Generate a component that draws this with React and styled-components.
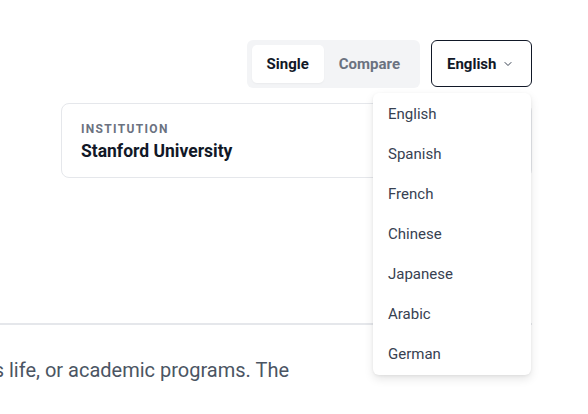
import React, { useState } from "react";
import styled, { createGlobalStyle } from "styled-components";
import { ChevronDown } from "lucide-react";

const GlobalStyle = createGlobalStyle`
  html, body {
    margin: 0;
    padding: 0;
    background: #ffffff;
    font-family: Roboto, "Liberation Sans", Arial, sans-serif;
    overflow: hidden;
  }
  * { box-sizing: border-box; }
`;

const languages = ["English", "Spanish", "French", "Chinese", "Japanese", "Arabic", "German"];

export default function App() {
  const [mode, setMode] = useState("single");
  const [lang, setLang] = useState("English");

  return (
    <>
      <GlobalStyle />
      <Page>
        <Toolbar>
          <Toggle>
            <ToggleButton $active={mode === "single"} onClick={() => setMode("single")}>
              Single
            </ToggleButton>
            <ToggleButton $active={mode === "compare"} onClick={() => setMode("compare")}>
              Compare
            </ToggleButton>
          </Toggle>
          <SelectWrap>
            <SelectButton>
              {lang}
              <ChevronDown size={12} strokeWidth={2} color="#374151" />
            </SelectButton>
            <Menu>
              {languages.map((l) => (
                <MenuItem key={l} onClick={() => setLang(l)}>
                  {l}
                </MenuItem>
              ))}
            </Menu>
          </SelectWrap>
        </Toolbar>

        <Card>
          <CardLabel>Institution</CardLabel>
          <CardTitle>Stanford University</CardTitle>
        </Card>

        <Divider />

        <Lead>
          <LeadText>
            Ask questions about admissions, financial aid, campus life, or academic programs. The
          </LeadText>
        </Lead>
      </Page>
    </>
  );
}

const Page = styled.div`
  width: 588px;
  height: 414px;
  padding: 40px 56px 0 0;
  display: flex;
  flex-direction: column;
`;

const Toolbar = styled.div`
  display: flex;
  justify-content: flex-end;
  align-items: center;
  gap: 11px;
  height: 47px;
`;

const Toggle = styled.div`
  display: flex;
  align-items: center;
  height: 48px;
  padding: 5px;
  background: #f3f4f6;
  border-radius: 6px;
`;

const ToggleButton = styled.button`
  height: 38px;
  padding: 0 15px;
  border: none;
  border-radius: 5px;
  font-family: inherit;
  font-size: 15px;
  font-weight: 700;
  cursor: pointer;
  background: ${(p) => (p.$active ? "#ffffff" : "transparent")};
  color: ${(p) => (p.$active ? "#111827" : "#6b7280")};
  box-shadow: ${(p) => (p.$active ? "0 1px 2px rgba(0,0,0,0.04)" : "none")};
`;

const SelectWrap = styled.div`
  position: relative;
`;

const SelectButton = styled.button`
  display: flex;
  align-items: center;
  gap: 6px;
  height: 47px;
  width: 101px;
  padding: 0 15px;
  border: 1px solid #111827;
  border-radius: 6px;
  background: #ffffff;
  font-family: inherit;
  font-size: 15px;
  font-weight: 700;
  color: #111827;
  cursor: pointer;
`;

const Menu = styled.ul`
  position: absolute;
  top: 53px;
  right: 1px;
  width: 158px;
  margin: 0;
  padding: 1px 0 1px;
  list-style: none;
  background: #ffffff;
  border-radius: 6px;
  box-shadow: 0 4px 10px rgba(0, 0, 0, 0.1), 0 1px 3px rgba(0, 0, 0, 0.06);
  z-index: 10;
`;

const MenuItem = styled.li`
  height: 40px;
  display: flex;
  align-items: center;
  padding: 0 15px;
  font-size: 15px;
  color: #374151;
  cursor: pointer;
`;

const Card = styled.div`
  margin: 16px 0 0 61px;
  height: 75px;
  padding: 18px 19px 0;
  border: 1px solid #e5e7eb;
  border-radius: 8px;
  background: #ffffff;
`;

const CardLabel = styled.div`
  font-size: 12px;
  font-weight: 700;
  letter-spacing: 0.11em;
  text-transform: uppercase;
  color: #6b7280;
  line-height: 14px;
`;

const CardTitle = styled.div`
  margin-top: 4px;
  font-size: 17.5px;
  font-weight: 700;
  color: #111827;
  line-height: 22px;
`;

const Divider = styled.hr`
  margin: 145px 0 0;
  border: none;
  border-top: 2px solid #e5e7eb;
`;

const Lead = styled.div`
  width: 289px;
  margin-top: 31px;
  display: flex;
  justify-content: flex-end;
`;

const LeadText = styled.span`
  white-space: nowrap;
  font-size: 20px;
  line-height: 28px;
  color: #4b5563;
`;
